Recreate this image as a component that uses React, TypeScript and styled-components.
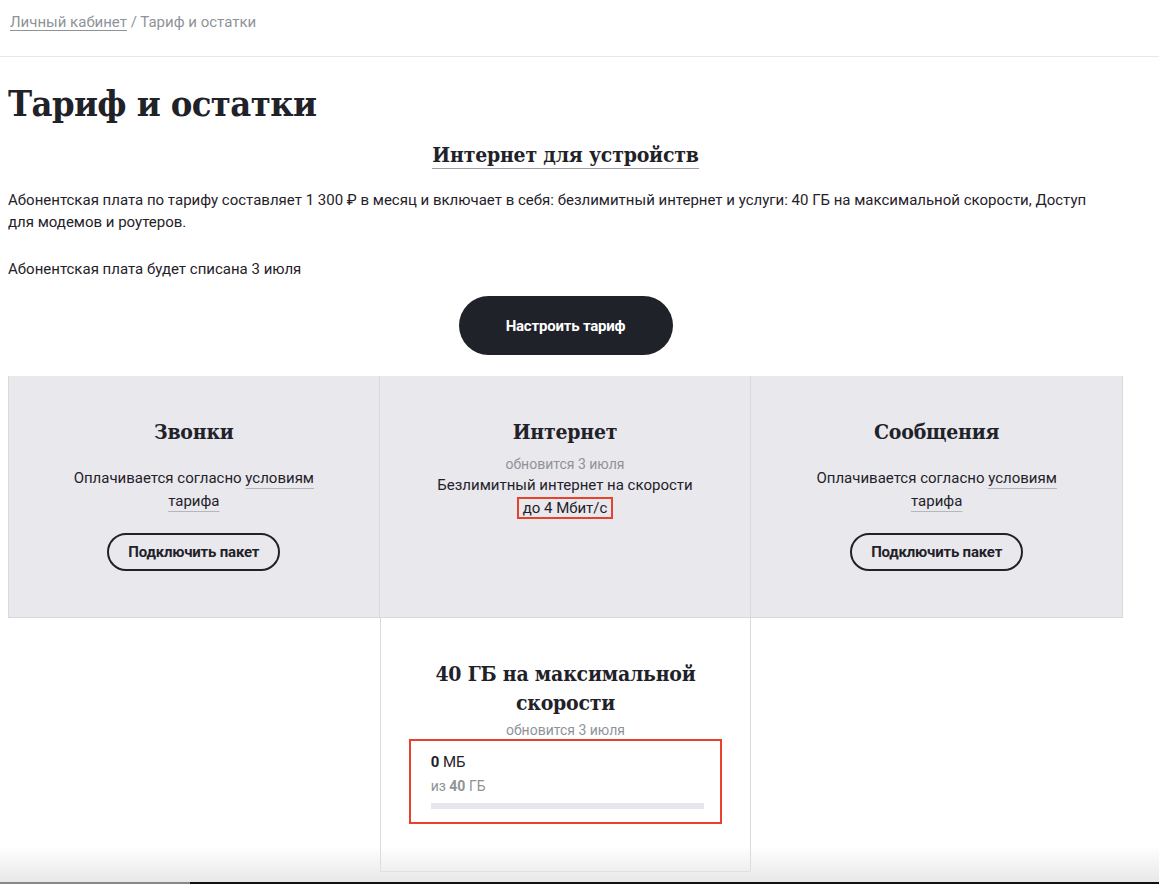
import styled, { createGlobalStyle } from 'styled-components';

const GlobalStyle = createGlobalStyle`
  html, body {
    margin: 0;
    padding: 0;
    background: #ffffff;
    color: #1f2229;
    font-family: Roboto, "Noto Sans", sans-serif;
  }
`;

const ink = '#1f2229';
const muted = '#8f9399';
const cardBg = '#e9e8ed';
const line = '#d7dadb';

const Page = styled.div`
  min-height: 884px;
  position: relative;
  overflow: hidden;
`;

const Breadcrumbs = styled.nav`
  height: 57px;
  box-sizing: border-box;
  padding: 12px 10px 0;
  font-size: 15px;
  line-height: 20px;
  color: ${muted};
  border-bottom: 1px solid #e8e8e8;
  a {
    color: ${muted};
    text-decoration: underline;
    text-underline-offset: 3px;
  }
`;

const Content = styled.main`
  width: 1115px;
  padding-left: 8px;
`;

const slab = `"DejaVu Serif Condensed", "DejaVu Serif", serif`;

const Title = styled.h1`
  margin: 23px 0 0;
  font-family: ${slab};
  font-stretch: condensed;
  font-weight: 700;
  font-size: 36px;
  line-height: 46px;
  letter-spacing: -0.6px;
`;

const TariffName = styled.h2`
  margin: 15px 0 0;
  text-align: center;
  font-family: ${slab};
  font-stretch: condensed;
  font-size: 21px;
  line-height: 28px;
  letter-spacing: -0.2px;
  span {
    border-bottom: 1px solid #9ca0a6;
    padding-bottom: 1px;
  }
`;

const Text = styled.p<{ $gap?: number }>`
  margin: ${({ $gap }) => $gap ?? 20}px 0 0;
  max-width: 1085px;
  font-size: 15px;
  line-height: 22px;
`;

const ButtonRow = styled.div`
  display: flex;
  justify-content: center;
  margin-top: 16px;
`;

const PrimaryButton = styled.button`
  width: 214px;
  height: 59px;
  border: none;
  border-radius: 30px;
  background: ${ink};
  color: #fff;
  font-family: Roboto, sans-serif;
  font-weight: 700;
  font-size: 15px;
  letter-spacing: -0.2px;
  cursor: pointer;
`;

const Grid = styled.section`
  display: grid;
  grid-template-columns: repeat(3, 1fr);
  margin-top: 21px;
`;

const Card = styled.div<{ $white?: boolean; $col?: number; $first?: boolean }>`
  grid-column: ${({ $col }) => $col ?? 'auto'};
  background: ${({ $white }) => ($white ? '#fff' : cardBg)};
  height: ${({ $white }) => ($white ? '254px' : '242px')};
  box-sizing: border-box;
  border-right: 1px solid ${line};
  border-bottom: 1px solid ${line};
  border-left: ${({ $first }) => ($first ? `1px solid ${line}` : 'none')};
  display: flex;
  flex-direction: column;
  align-items: center;
  padding: ${({ $white }) => ($white ? '41px 28px 0' : '41px 20px 0')};
  text-align: center;
`;

const CardTitle = styled.h3`
  margin: 0;
  font-family: ${slab};
  font-stretch: condensed;
  font-size: 21px;
  line-height: 29px;
  letter-spacing: -0.2px;
  max-width: 290px;
`;

const Updated = styled.div<{ $gap?: number }>`
  margin-top: ${({ $gap }) => $gap ?? 3}px;
  font-size: 14px;
  line-height: 18px;
  color: ${muted};
`;

const CardText = styled.div<{ $gap?: number }>`
  margin-top: ${({ $gap }) => $gap ?? 0}px;
  font-size: 15px;
  line-height: 23px;
  max-width: 280px;
`;

const Underlined = styled.span`
  text-decoration: underline;
  text-decoration-color: #b3b6bb;
  text-underline-offset: 5px;
  text-decoration-thickness: 1px;
`;

const Marked = styled.span`
  outline: 2px solid #e8412c;
  outline-offset: 0;
  padding: 0 4px;
`;

const OutlineButton = styled.button`
  margin-top: 20px;
  width: 173px;
  height: 38px;
  border: 2px solid ${ink};
  border-radius: 20px;
  background: transparent;
  color: ${ink};
  font-family: Roboto, sans-serif;
  font-weight: 700;
  font-size: 15px;
  letter-spacing: -0.2px;
`;

const Usage = styled.div`
  align-self: stretch;
  border: 2px solid #e8412c;
  height: 85px;
  box-sizing: border-box;
  padding: 10px 16px 0 20px;
  text-align: left;
`;

const Used = styled.div`
  font-size: 15px;
  line-height: 22px;
  b { font-weight: 700; }
`;

const Total = styled.div`
  margin-top: 2px;
  font-size: 14px;
  line-height: 22px;
  color: ${muted};
  b { font-weight: 700; }
`;

const Bar = styled.div`
  margin-top: 6px;
  height: 6px;
  background: #e6e6ec;
`;

const BarFill = styled.div`
  height: 100%;
  background: ${ink};
`;

const BottomFade = styled.div`
  position: absolute;
  left: 0;
  right: 0;
  bottom: 0;
  height: 38px;
  background: linear-gradient(to bottom, rgba(230, 230, 230, 0), rgba(228, 228, 228, 0.9));
  pointer-events: none;
`;

const ScrollLine = styled.div`
  position: absolute;
  left: 0;
  right: 0;
  bottom: 0;
  height: 2px;
  display: flex;
`;

const ScrollPart = styled.div<{ $dark?: boolean }>`
  flex: ${({ $dark }) => ($dark ? 1 : '0 0 190px')};
  background: ${({ $dark }) => ($dark ? '#111' : '#888')};
`;

export default function App() {
  const used = 0;
  return (
    <>
      <GlobalStyle />
      <Page>
        <Breadcrumbs>
          <a href="#">Личный кабинет</a> / Тариф и остатки
        </Breadcrumbs>
        <Content>
          <Title>Тариф и остатки</Title>
          <TariffName>
            <span>Интернет для устройств</span>
          </TariffName>
          <Text>
            Абонентская плата по тарифу составляет 1 300 ₽ в месяц и включает в себя: безлимитный интернет и услуги: 40 ГБ на максимальной скорости, Доступ для модемов и роутеров.
          </Text>
          <Text $gap={25}>Абонентская плата будет списана 3 июля</Text>
          <ButtonRow>
            <PrimaryButton>Настроить тариф</PrimaryButton>
          </ButtonRow>

          <Grid>
            <Card $first>
              <CardTitle>Звонки</CardTitle>
              <CardText $gap={21}>
                Оплачивается согласно <Underlined>условиям</Underlined>
                <br />
                <Underlined>тарифа</Underlined>
              </CardText>
              <OutlineButton>Подключить пакет</OutlineButton>
            </Card>
            <Card>
              <CardTitle>Интернет</CardTitle>
              <Updated $gap={9}>обновится 3 июля</Updated>
              <CardText $gap={1}>
                Безлимитный интернет на скорости
                <br />
                <Marked>до 4 Мбит/с</Marked>
              </CardText>
            </Card>
            <Card>
              <CardTitle>Сообщения</CardTitle>
              <CardText $gap={21}>
                Оплачивается согласно <Underlined>условиям</Underlined>
                <br />
                <Underlined>тарифа</Underlined>
              </CardText>
              <OutlineButton>Подключить пакет</OutlineButton>
            </Card>
            <Card $white $first $col={2}>
              <CardTitle>40 ГБ на максимальной скорости</CardTitle>
              <Updated $gap={4}>обновится 3 июля</Updated>
              <Usage>
                <Used>
                  <b>{used}</b> МБ
                </Used>
                <Total>
                  из <b>40</b> ГБ
                </Total>
                <Bar>
                  <BarFill style={{ width: `${(used / 40960) * 100}%` }} />
                </Bar>
              </Usage>
            </Card>
          </Grid>
        </Content>
        <BottomFade />
        <ScrollLine>
          <ScrollPart />
          <ScrollPart $dark />
        </ScrollLine>
      </Page>
    </>
  );
}
